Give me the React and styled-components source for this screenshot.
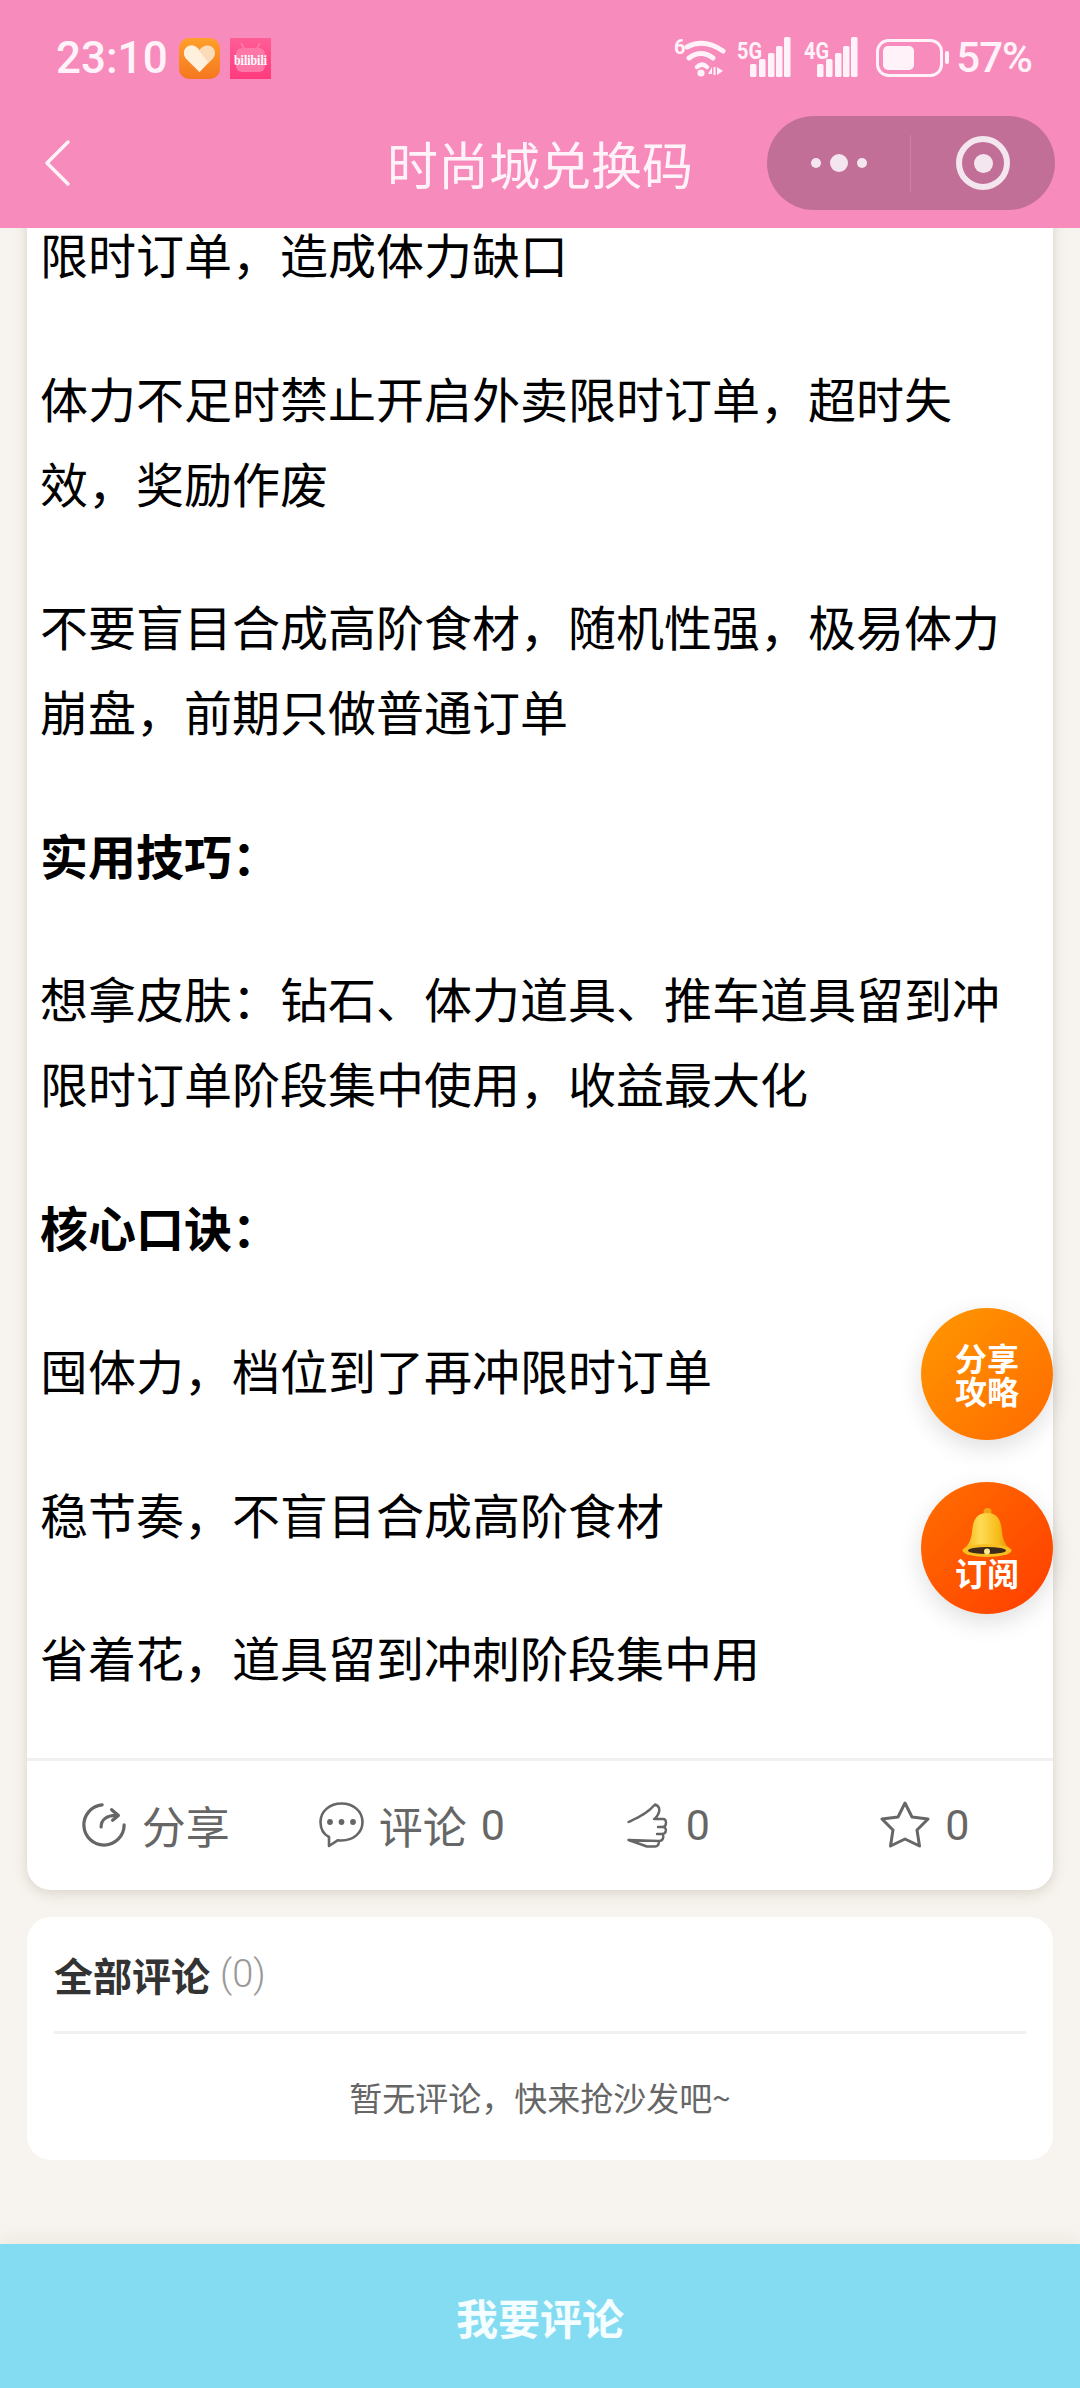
import styled, { createGlobalStyle } from 'styled-components';

const GlobalStyle = createGlobalStyle`
html, body {
	margin: 0;
	padding: 0;
	background: #f7f4ef;
}
* {
	box-sizing: border-box;
}
`

const Page = styled.div`
position: relative;
display: flex;
flex-direction: column;
width: 1080px;
height: 2388px;
overflow: hidden;
background: #f7f4ef;
font-family: "Noto Sans CJK SC", "Noto Sans", sans-serif;
`

const Header = styled.header`
flex: none;
height: 228px;
background: #f78bbc;
color: #fff;
`

const StatusBar = styled.div`
display: flex;
align-items: center;
justify-content: space-between;
height: 116px;
padding: 0 48px 0 56px;
`

const StatusGroup = styled.div`
display: flex;
align-items: center;
gap: ${(p) => p.$gap}px;
font-family: Roboto, sans-serif;
font-weight: 500;
`

const Time = styled.span`
font-size: 44px;
line-height: 60px;
color: #fff3f9;
`

const AppBadge = styled.svg`
display: block;
width: 41px;
height: 41px;
margin-left: ${(p) => p.$left || 0}px;
`

const Percent = styled.span`
font-size: 42px;
line-height: 60px;
letter-spacing: -1px;
margin-left: -5px;
color: #fff3f9;
`

const StatusIcon = styled.svg`
display: block;
flex: none;
margin-left: ${(p) => p.$left || 0}px;
`

const NavBar = styled.div`
position: relative;
display: flex;
align-items: center;
justify-content: center;
height: 94px;
`

const BackIcon = styled.svg`
position: absolute;
left: 43px;
top: 23px;
width: 30px;
height: 48px;
`

const Title = styled.h1`
margin: 0;
font-size: 51px;
font-weight: 400;
line-height: 94px;
color: #fff3f9;
`

const Capsule = styled.div`
position: absolute;
right: 25px;
top: 0;
display: flex;
align-items: center;
width: 288px;
height: 94px;
border-radius: 47px;
background: #c26f97;
`

const CapsuleCell = styled.div`
display: flex;
align-items: center;
justify-content: center;
gap: 9px;
height: 57px;
width: 144px;
border-right: ${(p) => (p.$divided ? '1px solid #cd81a5' : 'none')};
`

const Dot = styled.span`
display: block;
width: ${(p) => p.$size}px;
height: ${(p) => p.$size}px;
border-radius: 50%;
background: #f4e6ee;
`

const Ring = styled.span`
display: flex;
align-items: center;
justify-content: center;
width: 54px;
height: 54px;
border: 6px solid #f4e6ee;
border-radius: 50%;
`

const Scroller = styled.main`
flex: 1;
min-height: 0;
overflow: hidden;
padding: 0 27px;
`

const ArticleCard = styled.article`
margin-top: -17px;
border-radius: 0 0 24px 24px;
background: #fff;
box-shadow: 0 3px 14px rgba(110, 90, 70, 0.22);
`

const Body = styled.div`
padding: 0 13px;
`

const Para = styled.p`
margin: 0 0 58.5px;
font-size: 48px;
line-height: 85px;
font-weight: ${(p) => (p.$bold ? 700 : 400)};
color: #000;
`

const Actions = styled.div`
display: grid;
grid-template-columns: repeat(4, 1fr);
height: 132px;
border-top: 3px solid #f1f0ee;
`

const Action = styled.div`
display: flex;
align-items: center;
justify-content: center;
gap: ${(p) => p.$gap}px;
font-size: 44px;
color: #666;
`

const ActionIcon = styled.svg`
display: block;
flex: none;
fill: none;
stroke: #666;
stroke-width: ${(p) => p.$stroke || 3};
stroke-linecap: round;
stroke-linejoin: round;
`

const Count = styled.span`
font-family: Roboto, sans-serif;
font-size: 43px;
margin-left: ${(p) => p.$left || 0}px;
`

const CommentCard = styled.section`
margin-top: 27px;
padding: 0 27px;
border-radius: 24px;
background: #fff;
`

const CommentHead = styled.div`
display: flex;
align-items: center;
gap: 10px;
height: 117px;
border-bottom: 3px solid #f0f0f0;
`

const CommentTitle = styled.h2`
margin: 0;
font-size: 39px;
font-weight: 700;
color: #333;
`

const CommentCount = styled.span`
font-family: Roboto, sans-serif;
font-size: 38px;
font-weight: 300;
color: #999;
`

const Empty = styled.div`
display: flex;
align-items: center;
justify-content: center;
height: 126px;
font-size: 33px;
color: #666;
`

const Footer = styled.footer`
flex: none;
display: flex;
align-items: center;
justify-content: center;
height: 144px;
background: #84dcf2;
box-shadow: 0 -6px 18px rgba(110, 90, 70, 0.08);
font-size: 42px;
font-weight: 700;
color: #f4fdff;
`

const FloatingStack = styled.div`
position: absolute;
right: 27px;
top: 1308px;
display: flex;
flex-direction: column;
gap: 42px;
`

const Fab = styled.div`
display: flex;
flex-direction: column;
align-items: center;
justify-content: center;
width: 132px;
height: 132px;
border-radius: 50%;
background: linear-gradient(135deg, ${(p) => p.$from}, ${(p) => p.$to});
box-shadow: 0 8px 24px rgba(0, 0, 0, 0.13);
font-size: 32px;
font-weight: 700;
line-height: 33px;
color: #fff;
text-align: center;
`

const BellIcon = styled.svg`
display: block;
width: 50px;
height: 49px;
margin-bottom: -1px;
`

function SignalIcon({ label }) {
	const bars = [
		[13, 13],
		[22, 18],
		[31, 24],
		[39, 31],
		[47, 40]
	];
	return (
		<StatusIcon width="56" height="42" viewBox="0 0 56 42" fill="#fff3f9">
			<text x="0" y="22" fontFamily="Roboto, sans-serif" fontWeight="700" fontSize="23" textLength="25" lengthAdjust="spacingAndGlyphs">{label}</text>
			{bars.map(([x, h]) => (
				<rect key={x} x={x} y={40 - h} width="6.5" height={h} rx="1.5" />
			))}
		</StatusIcon>
	);
}

function WifiIcon() {
	return (
		<StatusIcon width="52" height="42" viewBox="0 0 52 42" fill="none" stroke="#fff3f9" strokeLinecap="round">
			<text x="0" y="17" fontFamily="Roboto, sans-serif" fontWeight="700" fontSize="20" fill="#fff3f9" stroke="none">6</text>
			<path d="M13 10 Q30 1 49 14" strokeWidth="5" />
			<path d="M15 21 Q27 12 39 21" strokeWidth="5" />
			<path d="M23 30 Q28 25 33 30" strokeWidth="4.5" />
			<circle cx="27" cy="36" r="3.6" fill="#fff3f9" stroke="none" />
			<path d="M38 30 L34 37 H38 Z M43 30 V38 L49 34 Z M39.5 30 H41.5 V38 H39.5 Z" fill="#fff3f9" stroke="none" />
		</StatusIcon>
	);
}

function BatteryIcon() {
	return (
		<StatusIcon width="74" height="38" viewBox="0 0 74 38" fill="none" $left={5}>
			<rect x="1.5" y="1.5" width="64" height="35" rx="11" stroke="#fff3f9" strokeWidth="3" />
			<rect x="7" y="7" width="31" height="24" rx="5" fill="#fff3f9" />
			<rect x="69" y="12" width="4" height="13" rx="2" fill="#fff3f9" />
		</StatusIcon>
	);
}

export default function App() {
	return (
		<Page>
			<GlobalStyle />
			<Header>
				<StatusBar>
					<StatusGroup $gap={11}>
						<Time>23:10</Time>
						<AppBadge viewBox="0 0 41 41">
							<defs>
								<linearGradient id="heartBg" x1="0" y1="0" x2="0" y2="1">
									<stop offset="0" stopColor="#ffa02a" />
									<stop offset="1" stopColor="#f5771f" />
								</linearGradient>
							</defs>
							<rect width="41" height="41" rx="10" fill="url(#heartBg)" />
							<path d="M20.5 34 L7 20.5 C2.5 15 6 7.5 12.5 7.5 C16 7.5 18.5 9 20.5 12 C22.5 9 25 7.5 28.5 7.5 C35 7.5 38.5 15 34 20.5 Z" fill="#fbdcb8" />
							<path d="M7 20.5 C2.5 15 6 7.5 12.5 7.5 C14 7.5 16 8 17 9 L29 24 L20.5 34 Z" fill="#fff0de" />
						</AppBadge>
						<AppBadge viewBox="0 0 41 41" $left={-1}>
							<defs>
								<linearGradient id="biliBg" x1="0" y1="0" x2="0" y2="1">
									<stop offset="0" stopColor="#ff5d96" />
									<stop offset="1" stopColor="#ff3a7d" />
								</linearGradient>
							</defs>
							<rect width="41" height="41" fill="url(#biliBg)" />
							<rect x="6" y="10" width="29" height="24" rx="6" fill="#ff77a6" />
							<path d="M14 10 L11 5 M27 10 L30 5" stroke="#ff77a6" strokeWidth="2" />
							<text x="4" y="27" fontFamily="Liberation Serif, serif" fontWeight="700" fontSize="15" fill="#fff" textLength="33" lengthAdjust="spacingAndGlyphs">bilibili</text>
						</AppBadge>
					</StatusGroup>
					<StatusGroup $gap={11}>
						<WifiIcon />
						<SignalIcon label="5G" />
						<SignalIcon label="4G" />
						<BatteryIcon />
						<Percent>57%</Percent>
					</StatusGroup>
				</StatusBar>
				<NavBar>
					<BackIcon viewBox="0 0 30 48" fill="none" stroke="#fff3f9" strokeWidth="3.5" strokeLinecap="round" strokeLinejoin="round">
						<path d="M25 3 L4 24 L25 45" />
					</BackIcon>
					<Title>时尚城兑换码</Title>
					<Capsule>
						<CapsuleCell $divided>
							<Dot $size={10} />
							<Dot $size={18} />
							<Dot $size={10} />
						</CapsuleCell>
						<CapsuleCell>
							<Ring>
								<Dot $size={19} />
							</Ring>
						</CapsuleCell>
					</Capsule>
				</NavBar>
			</Header>

			<Scroller>
				<ArticleCard>
					<Body>
						<Para>限时订单，造成体力缺口</Para>
						<Para>体力不足时禁止开启外卖限时订单，超时失效，奖励作废</Para>
						<Para>不要盲目合成高阶食材，随机性强，极易体力崩盘，前期只做普通订单</Para>
						<Para $bold>实用技巧：</Para>
						<Para>想拿皮肤：钻石、体力道具、推车道具留到冲限时订单阶段集中使用，收益最大化</Para>
						<Para $bold>核心口诀：</Para>
						<Para>囤体力，档位到了再冲限时订单</Para>
						<Para>稳节奏，不盲目合成高阶食材</Para>
						<Para>省着花，道具留到冲刺阶段集中用</Para>
					</Body>
					<Actions>
						<Action $gap={15}>
							<ActionIcon width="46" height="46" viewBox="0 0 48 48" $stroke={3.4}>
								<path d="M22 3 A21 21 0 1 0 45 24" />
								<path d="M21 26 C21 19 26 14 37 14" />
								<path d="M32 8 L39 14 L33 19" />
							</ActionIcon>
							<span>分享</span>
						</Action>
						<Action $gap={14}>
							<ActionIcon width="46" height="46" viewBox="0 0 46 46" $stroke={2.6}>
								<path d="M10 35 C4 32 1.5 26.5 1.5 20 C1.5 9 11 1.5 22.5 1.5 C34 1.5 43.5 9 43.5 20 C43.5 31 34 38.5 22.5 38.5 C21 38.5 20 38.4 19 38.2 L10 44 Z" />
								<circle cx="11" cy="20" r="1.6" fill="#666" />
								<circle cx="22.5" cy="20" r="1.6" fill="#666" />
								<circle cx="34" cy="20" r="1.6" fill="#666" />
							</ActionIcon>
							<span>评论</span>
							<Count>0</Count>
						</Action>
						<Action $gap={18}>
							<ActionIcon width="41" height="45" viewBox="0 0 41 45" $stroke={2.4}>
								<path d="M1.5 19 C10 15 20 11 28 1.5 C31 2.5 33 5 32 9 C31 12 29 15 27 16 L36 16 C40 16 40 23 36 24 L31 24 M36 24 C40 24 40 31 35 31 L30 31 M35 31 C37 32 37 38 32 38 L30 38 M32 38 C32 41 31 43.5 28 43.5 L20 43.5 L1.5 37 Z" />
							</ActionIcon>
							<Count>0</Count>
						</Action>
						<Action $gap={15}>
							<ActionIcon width="50" height="48" viewBox="0 0 50 48" $stroke={3}>
								<path d="M25 2 L32 16 L48 18 L37 29 L39.5 45 L25 38 L10.5 45 L13 29 L2 18 L18 16 Z" />
							</ActionIcon>
							<Count>0</Count>
						</Action>
					</Actions>
				</ArticleCard>

				<CommentCard>
					<CommentHead>
						<CommentTitle>全部评论</CommentTitle>
						<CommentCount>(0)</CommentCount>
					</CommentHead>
					<Empty>暂无评论，快来抢沙发吧~</Empty>
				</CommentCard>
			</Scroller>

			<Footer>我要评论</Footer>

			<FloatingStack>
				<Fab $from="#ff9800" $to="#ff6a00">分享<br />攻略</Fab>
				<Fab $from="#ff6f00" $to="#ff3d00">
					<BellIcon viewBox="0 0 50 49">
						<defs>
							<linearGradient id="bellBody" x1="0" y1="0" x2="1" y2="0">
								<stop offset="0" stopColor="#f2b111" />
								<stop offset="0.35" stopColor="#ffdc55" />
								<stop offset="0.75" stopColor="#f7bb1a" />
								<stop offset="1" stopColor="#e08c08" />
							</linearGradient>
						</defs>
						<circle cx="25.5" cy="4" r="4" fill="#efa615" />
						<path d="M25 5 C13 5 11 14 10 24 C9 33 6 37 2 41 H48 C44 37 41 33 40 24 C39 14 37 5 25 5 Z" fill="url(#bellBody)" />
						<ellipse cx="25" cy="42.5" rx="24.5" ry="6.5" fill="#f7bf22" />
						<ellipse cx="25" cy="42.5" rx="19" ry="3.6" fill="#3e2a1a" />
						<circle cx="25" cy="43.5" r="3" fill="#ffe98f" />
					</BellIcon>
					<span>订阅</span>
				</Fab>
			</FloatingStack>
		</Page>
	);
}
